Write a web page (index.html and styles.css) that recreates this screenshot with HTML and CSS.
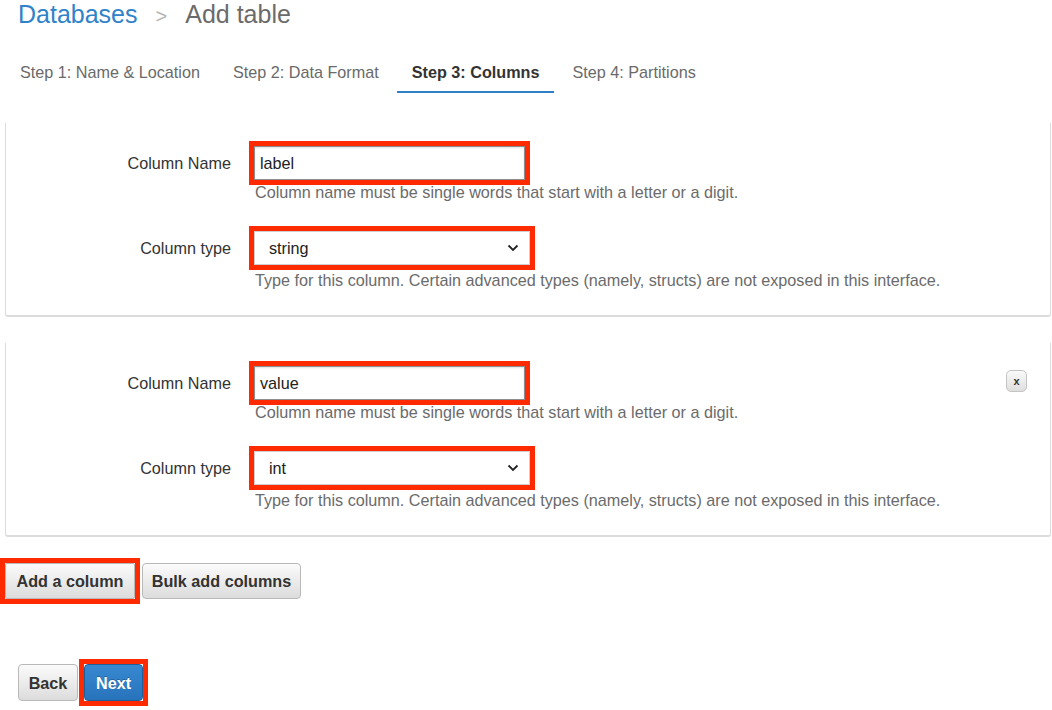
FILE: index.html
```html
<!DOCTYPE html>
<html>
<head>
<meta charset="utf-8">
<link rel="stylesheet" href="styles.css">
</head>
<body>
<div class="page">
  <h1 class="crumbs"><a class="crumb-link">Databases</a><span class="sep">&gt;</span><span class="crumb-current">Add table</span></h1>

  <ul class="tabs">
    <li class="tab">Step 1: Name &amp; Location</li>
    <li class="tab">Step 2: Data Format</li>
    <li class="tab active">Step 3: Columns</li>
    <li class="tab">Step 4: Partitions</li>
  </ul>

  <div class="card">
    <div class="row">
      <label class="label">Column Name</label>
      <div class="field">
        <div class="input marked">label</div>
        <div class="help">Column name must be single words that start with a letter or a digit.</div>
      </div>
    </div>
    <div class="row">
      <label class="label">Column type</label>
      <div class="field">
        <div class="select marked"><span>string</span><svg class="chev" width="12" height="8" viewBox="0 0 12 8"><path d="M1.5 1.5 L6 6 L10.5 1.5" fill="none" stroke="#222" stroke-width="1.8"/></svg></div>
        <div class="help">Type for this column. Certain advanced types (namely, structs) are not exposed in this interface.</div>
      </div>
    </div>
  </div>

  <div class="card card-removable">
    <button class="remove">x</button>
    <div class="row">
      <label class="label">Column Name</label>
      <div class="field">
        <div class="input marked">value</div>
        <div class="help">Column name must be single words that start with a letter or a digit.</div>
      </div>
    </div>
    <div class="row">
      <label class="label">Column type</label>
      <div class="field">
        <div class="select marked"><span>int</span><svg class="chev" width="12" height="8" viewBox="0 0 12 8"><path d="M1.5 1.5 L6 6 L10.5 1.5" fill="none" stroke="#222" stroke-width="1.8"/></svg></div>
        <div class="help">Type for this column. Certain advanced types (namely, structs) are not exposed in this interface.</div>
      </div>
    </div>
  </div>

  <div class="actions">
    <button class="btn btn-add marked">Add a column</button>
    <button class="btn btn-bulk">Bulk add columns</button>
  </div>

  <div class="wizard-nav">
    <button class="btn btn-back">Back</button>
    <button class="btn btn-primary marked">Next</button>
  </div>
</div>
</body>
</html>
```

FILE: styles.css
```css
* { box-sizing: border-box; }
html, body { margin: 0; padding: 0; background: #fff; }
body {
  font-family: "Liberation Sans", Arial, Helvetica, sans-serif;
  font-size: 16.2px;
  color: #333;
  width: 1052px;
  height: 710px;
  overflow: hidden;
}
.page { padding: 0 1px 0 5px; }

.crumbs {
  margin: 0;
  padding-left: 13px;
  font-size: 25px;
  font-weight: normal;
  line-height: 28px;
  display: flex;
  align-items: baseline;
}
.crumb-link { color: #2f83c9; }
.sep { color: #b5b5b5; font-size: 20px; margin: 0 18px 0 18px; }
.crumb-current { color: #6b6b6b; }

.tabs {
  list-style: none;
  margin: 23px 0 0;
  padding: 0;
  display: flex;
  gap: 3px;
}
.tab {
  padding: 9px 15px;
  line-height: 20px;
  color: #6a6a6a;
  border-bottom: 2px solid transparent;
}
.tab.active {
  color: #333;
  font-weight: bold;
  border-bottom-color: #2f7fc6;
}

.card {
  margin-top: 30px;
  border-left: 1px solid #dcdcdc;
  border-right: 1px solid #dcdcdc;
  border-bottom: 2px solid #dcdcdc;
  border-radius: 0 0 3px 3px;
  padding: 23px 0 25px;
  position: relative;
}
.card + .card { margin-top: 26px; }

.row {
  display: grid;
  grid-template-columns: 225px 1fr;
  column-gap: 23px;
  align-items: start;
}
.row + .row { margin-top: 29px; }
.label {
  text-align: right;
  line-height: 34px;
  color: #333;
}
.field { display: flex; flex-direction: column; align-items: flex-start; }

.marked { position: relative; }
.marked::after {
  content: "";
  position: absolute;
  top: -6px;
  left: -6px;
  right: -6px;
  bottom: -6px;
  border: 5px solid #ff2a00;
  pointer-events: none;
}

.input {
  width: 271px;
  height: 34px;
  border: 1px solid #8e8e8e;
  box-shadow: inset 0 1px 2px rgba(0,0,0,0.12);
  padding: 0 5px;
  line-height: 32px;
  color: #222;
  background: #fff;
}
.select {
  width: 276px;
  height: 34px;
  border: 1px solid #cfcfcf;
  padding: 0 10px 0 14px;
  line-height: 32px;
  color: #222;
  background: #fff;
  display: flex;
  align-items: center;
  justify-content: space-between;
}
.chev { display: block; }

.help {
  margin-top: 2px;
  margin-left: 1px;
  line-height: 20px;
  color: #6b6b6b;
}
.row + .row .help { margin-top: 5px; }

.remove {
  position: absolute;
  top: 27px;
  right: 23px;
  width: 21px;
  height: 22px;
  padding: 0;
  border: 1px solid #c4c4c4;
  border-radius: 5px;
  background: linear-gradient(#fafafa, #dedede);
  font-family: "Liberation Sans", Arial, sans-serif;
  font-size: 11px;
  font-weight: bold;
  color: #333;
  line-height: 18px;
}

.btn {
  font-family: "Liberation Sans", Arial, Helvetica, sans-serif;
  font-size: 16.2px;
  font-weight: bold;
  color: #333;
  height: 36px;
  padding: 0 8px;
  white-space: nowrap;
  border: 1px solid #b9b9b9;
  border-radius: 4px;
  background: linear-gradient(#fbfbfb, #dcdcdc);
  line-height: 34px;
}
.actions {
  margin-top: 26px;
  display: flex;
  gap: 7px;
}
.btn-add { width: 130px; border-radius: 2px; }
.btn-bulk { width: 159px; }

.wizard-nav {
  margin-top: 65px;
  padding-left: 13px;
  display: flex;
  gap: 6px;
}
.btn-back { width: 60px; height: 37px; }
.btn-primary {
  width: 59px;
  height: 37px;
  color: #fff;
  background: linear-gradient(#3789d2, #2873bb);
  border-color: #1f5d99;
  text-shadow: 0 -1px 0 rgba(0,0,0,0.25);
}
```
